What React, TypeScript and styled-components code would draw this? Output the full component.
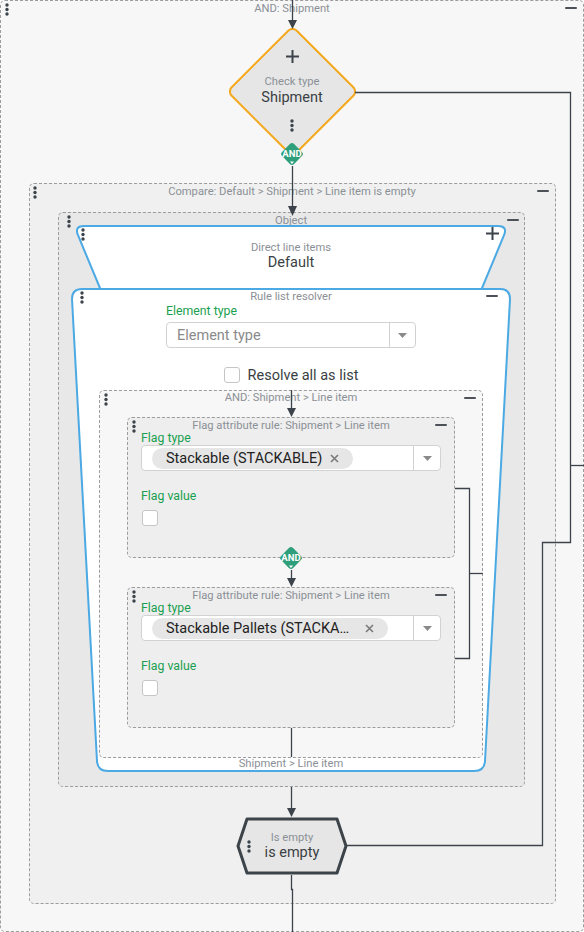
import React from 'react';
import styled, { createGlobalStyle } from 'styled-components';

const GlobalStyle = createGlobalStyle`
  html, body { margin: 0; padding: 0; background: #ffffff; }
  body { font-family: Roboto, "Noto Sans", "Liberation Sans", sans-serif; }
  * { box-sizing: border-box; }
`;

const C = {
  line: '#3c434a',
  title: '#8b9096',
  text: '#3a3f44',
  green: '#1a9f50',
  blue: '#4ba9e4',
  orange: '#f5a81c',
  badge: '#2f9e7a',
  dash: '#9c9c9c',
};

const Canvas = styled.div`
  position: relative;
  width: 584px;
  height: 932px;
  overflow: hidden;
`;

const Group = styled.div<{ $bg: string; $w: number; $h?: number; $mt?: number; $mr?: number; $pb?: number }>`
  position: relative;
  flex-shrink: 0;
  width: ${p => p.$w}px;
  ${p => (p.$h ? `height: ${p.$h}px;` : '')}
  margin-top: ${p => p.$mt ?? 0}px;
  margin-right: ${p => p.$mr ?? 0}px;
  padding-bottom: ${p => p.$pb ?? 0}px;
  border: 1px dashed ${C.dash};
  border-radius: 5px;
  background: ${p => p.$bg};
  display: flex;
  flex-direction: column;
  align-items: center;
`;

const HeaderRow = styled.div<{ $pt?: number }>`
  align-self: stretch;
  flex-shrink: 0;
  height: ${p => 14 + (p.$pt ?? 0)}px;
  padding-top: ${p => p.$pt ?? 0}px;
  display: grid;
  grid-template-columns: 40px 1fr 40px;
  align-items: start;
`;

const HeaderLeft = styled.div<{ $ml: number; $mt: number }>`
  justify-self: start;
  padding-left: ${p => p.$ml}px;
  padding-top: ${p => p.$mt}px;
`;

const HeaderTitle = styled.div<{ $shift: number }>`
  text-align: center;
  font-size: 11.2px;
  line-height: 14px;
  padding-top: ${p => p.$shift}px;
  color: ${C.title};
  white-space: nowrap;
`;

const HeaderRight = styled.div<{ $mr: number }>`
  justify-self: end;
  margin-right: ${p => p.$mr}px;
  height: 14px;
  display: flex;
  align-items: center;
`;

const MinusBar = styled.span`
  display: block;
  width: 12px;
  height: 2px;
  border-radius: 1px;
  background: #4b5157;
`;

const DotsSvg = styled.svg`
  display: block;
  fill: ${C.line};
`;

function Dots() {
  return (
    <DotsSvg width="4" height="13" viewBox="0 0 4 13">
      <circle cx="2" cy="2" r="1.7" />
      <circle cx="2" cy="6.5" r="1.7" />
      <circle cx="2" cy="11" r="1.7" />
    </DotsSvg>
  );
}

const PlusSvg = styled.svg`
  display: block;
  stroke: ${C.line};
  stroke-width: 2;
`;

function Plus() {
  return (
    <PlusSvg width="13" height="13" viewBox="0 0 13 13">
      <path d="M6.5 0 V13 M0 6.5 H13" />
    </PlusSvg>
  );
}

function GroupHeader(props: {
  title: string;
  dotsLeft?: number;
  dotsTop?: number;
  minusRight?: number;
  pt?: number;
  shift?: number;
}) {
  return (
    <HeaderRow $pt={props.pt}>
      <HeaderLeft $ml={props.dotsLeft ?? 4} $mt={props.dotsTop ?? 2}>
        <Dots />
      </HeaderLeft>
      <HeaderTitle $shift={props.shift ?? 1}>{props.title}</HeaderTitle>
      <HeaderRight $mr={props.minusRight ?? 6}>
        <MinusBar />
      </HeaderRight>
    </HeaderRow>
  );
}

/* ---------- stacked shape nodes ---------- */

const Stack = styled.div<{ $w: number; $h: number; $mt?: number; $z?: number }>`
  position: relative;
  z-index: ${p => p.$z ?? 'auto'};
  flex-shrink: 0;
  display: grid;
  width: ${p => p.$w}px;
  height: ${p => p.$h}px;
  margin-top: ${p => p.$mt ?? 0}px;
  & > * { grid-area: 1 / 1; }
`;

const ShapeSvg = styled.svg`
  display: block;
`;

const NodeColumn = styled.div<{ $pt?: number }>`
  display: flex;
  flex-direction: column;
  align-items: center;
  padding-top: ${p => p.$pt ?? 0}px;
  min-width: 0;
`;

const SmallGray = styled.div<{ $mt?: number; $lh?: number }>`
  font-size: 11.2px;
  line-height: ${p => p.$lh ?? 13}px;
  color: ${C.title};
  margin-top: ${p => p.$mt ?? 0}px;
  white-space: nowrap;
`;

const MainText = styled.div<{ $mt?: number; $lh?: number }>`
  font-size: 14.5px;
  line-height: ${p => p.$lh ?? 16}px;
  color: ${C.text};
  margin-top: ${p => p.$mt ?? 0}px;
  white-space: nowrap;
`;

const Spacer = styled.div<{ $h: number }>`
  height: ${p => p.$h}px;
  flex-shrink: 0;
`;

/* diamond */
function DiamondNode() {
  return (
    <Stack $w={127} $h={127} $mt={13}>
      <ShapeSvg width="127" height="127" viewBox="0 0 127 127">
        <rect x="17.5" y="17.5" width="92" height="92" rx="6" transform="rotate(45 63.5 63.5)"
          fill="#e6e6e6" stroke={C.orange} strokeWidth="2" />
      </ShapeSvg>
      <NodeColumn $pt={22}>
        <Plus />
        <SmallGray $mt={12}>Check type</SmallGray>
        <MainText $mt={2}>Shipment</MainText>
        <Spacer $h={13} />
        <Dots />
      </NodeColumn>
    </Stack>
  );
}

/* AND badge */
const BadgeText = styled.div`
  display: flex;
  align-items: center;
  justify-content: center;
  padding-bottom: 1px;
  font-size: 9.5px;
  font-weight: 700;
  color: #ffffff;
`;

function AndBadge(props: { mt: number }) {
  return (
    <Stack $w={24} $h={24} $mt={props.mt} $z={2}>
      <ShapeSvg width="24" height="24" viewBox="0 0 24 24">
        <rect x="3.5" y="3.5" width="17" height="17" rx="3" transform="rotate(45 12 12)" fill={C.badge} />
        <polygon points="10,19.5 14,19.5 12,22" fill="#ffffff" />
      </ShapeSvg>
      <BadgeText>AND</BadgeText>
    </Stack>
  );
}

/* direct line items trapezoid */
const DirectTopRow = styled.div`
  align-self: stretch;
  height: 14px;
  display: flex;
  justify-content: space-between;
  align-items: flex-start;
  padding: 0 9px 0 7px;
`;

const DotsBox = styled.div<{ $mt?: number }>`
  padding-top: ${p => p.$mt ?? 0}px;
`;

function DirectNode() {
  return (
    <Stack $w={434} $h={80} $mt={-2}>
      <ShapeSvg width="434" height="80" viewBox="0 0 434 80">
        <path d="M10 1 H424 Q433 1 430.5 9 L401 80 H33 L3.5 9 Q1 1 10 1 Z"
          fill="#ffffff" stroke={C.blue} strokeWidth="2" />
      </ShapeSvg>
      <NodeColumn $pt={2}>
        <DirectTopRow>
          <DotsBox $mt={1}><Dots /></DotsBox>
          <Plus />
        </DirectTopRow>
        <SmallGray>Direct line items</SmallGray>
        <MainText $mt={1}>Default</MainText>
      </NodeColumn>
    </Stack>
  );
}

/* form controls */
const FieldBlock = styled.div<{ $w: number }>`
  width: ${p => p.$w}px;
  display: flex;
  flex-direction: column;
  align-items: stretch;
`;

const FieldLabel = styled.div<{ $mt?: number }>`
  font-size: 12.3px;
  line-height: 14px;
  color: ${C.green};
  margin-top: ${p => p.$mt ?? 0}px;
  white-space: nowrap;
`;

const SelectBox = styled.div<{ $mt?: number }>`
  display: flex;
  height: 26px;
  margin-top: ${p => p.$mt ?? 0}px;
  background: #ffffff;
  border: 1px solid #d2d2d2;
  border-radius: 4px;
`;

const SelectValue = styled.div`
  flex: 1;
  min-width: 0;
  display: flex;
  align-items: center;
  padding-left: 10px;
`;

const Placeholder = styled.span`
  font-size: 14.5px;
  color: #8a8a8a;
  white-space: nowrap;
`;

const SelectCaret = styled.div<{ $w: number }>`
  width: ${p => p.$w}px;
  flex-shrink: 0;
  border-left: 1px solid #d2d2d2;
  display: flex;
  align-items: center;
  justify-content: center;
`;

function Caret() {
  return (
    <svg width="9" height="5" viewBox="0 0 9 5">
      <polygon points="0,0 9,0 4.5,5" fill="#8a8a8a" />
    </svg>
  );
}

const Chip = styled.span`
  display: inline-flex;
  align-items: center;
  height: 21px;
  padding: 0 14px;
  border-radius: 11px;
  background: #e6e6e6;
`;

const ChipText = styled.span<{ $w?: number }>`
  font-size: 14.5px;
  color: #222222;
  white-space: nowrap;
  margin-right: 8px;
  ${p => (p.$w ? `width: ${p.$w}px;` : '')}
`;

function XIcon() {
  return (
    <svg width="9" height="9" viewBox="0 0 9 9">
      <path d="M1 1 L8 8 M8 1 L1 8" stroke="#7a7a7a" strokeWidth="1.6" />
    </svg>
  );
}

const CheckBox = styled.span<{ $mt?: number; $ml?: number }>`
  display: block;
  flex-shrink: 0;
  width: 16px;
  height: 16px;
  margin-top: ${p => p.$mt ?? 0}px;
  margin-left: ${p => p.$ml ?? 0}px;
  background: #ffffff;
  border: 1px solid #c5c5c5;
  border-radius: 3px;
`;

const CheckRow = styled.div<{ $mt?: number }>`
  display: flex;
  align-items: center;
  gap: 8px;
  height: 16px;
  margin-top: ${p => p.$mt ?? 0}px;
`;

const CheckLabel = styled.span`
  font-size: 14.5px;
  line-height: 16px;
  padding-top: 1px;
  color: ${C.text};
  white-space: nowrap;
`;

/* flag rule */
const FlagBody = styled.div`
  align-self: stretch;
  padding: 0 13px;
  display: flex;
  flex-direction: column;
  align-items: stretch;
`;

function FlagRule(props: { chip: string; chipW?: number; mt: number }) {
  return (
    <Group $w={328} $bg="#eeeeee" $mt={props.mt} $pb={31}>
      <GroupHeader title="Flag attribute rule: Shipment > Line item" minusRight={7} />
      <FlagBody>
        <FieldLabel $mt={-1}>Flag type</FieldLabel>
        <SelectBox $mt={0}>
          <SelectValue>
            <Chip>
              <ChipText $w={props.chipW}>{props.chip}</ChipText>
              <XIcon />
            </Chip>
          </SelectValue>
          <SelectCaret $w={27}><Caret /></SelectCaret>
        </SelectBox>
        <FieldLabel $mt={18}>Flag value</FieldLabel>
        <CheckBox $mt={7} $ml={1} />
      </FlagBody>
    </Group>
  );
}

/* resolver */
const BottomLabel = styled.div`
  font-size: 11.2px;
  line-height: 12px;
  color: ${C.title};
  white-space: nowrap;
`;

function ResolverNode() {
  return (
    <Stack $w={440} $h={484} $mt={-17} $z={1}>
      <ShapeSvg width="440" height="484" viewBox="0 0 440 484">
        <path d="M11 1 H429 Q439 1 439 11 L414 473 Q413.5 483 403 483 H37 Q26.5 483 26 473 L1 11 Q1 1 11 1 Z"
          fill="#ffffff" stroke={C.blue} strokeWidth="2" />
      </ShapeSvg>
      <NodeColumn>
        <GroupHeader title="Rule list resolver" pt={1} dotsLeft={9} dotsTop={1.5} minusRight={13} />
        <FieldBlock $w={250}>
          <FieldLabel $mt={1}>Element type</FieldLabel>
          <SelectBox $mt={4}>
            <SelectValue><Placeholder>Element type</Placeholder></SelectValue>
            <SelectCaret $w={26}><Caret /></SelectCaret>
          </SelectBox>
        </FieldBlock>
        <CheckRow $mt={19}>
          <CheckBox />
          <CheckLabel>Resolve all as list</CheckLabel>
        </CheckRow>
        <Group $w={384} $bg="#f7f7f7" $mt={7} $pb={29}>
          <GroupHeader title="AND: Shipment > Line item" shift={0} />
          <FlagRule mt={12} chip="Stackable (STACKABLE)" />
          <AndBadge mt={-12} />
          <FlagRule mt={17} chip="Stackable Pallets (STACKA…" chipW={191} />
        </Group>
        <BottomLabel>Shipment &gt; Line item</BottomLabel>
      </NodeColumn>
    </Stack>
  );
}

/* hexagon */
const HexContent = styled.div`
  display: grid;
  grid-template-columns: 1fr auto 1fr;
  align-items: center;
`;

const HexDots = styled.div`
  justify-self: start;
  margin-left: 11px;
`;

const HexText = styled.div`
  display: flex;
  flex-direction: column;
  align-items: center;
`;

function HexNode() {
  return (
    <Stack $w={112} $h={58} $mt={30}>
      <ShapeSvg width="112" height="58" viewBox="0 0 112 58">
        <polygon points="2,29 11,2 101,2 110,29 101,56 11,56"
          fill="#e6e6e6" stroke="#3d4449" strokeWidth="3" strokeLinejoin="round" />
      </ShapeSvg>
      <HexContent>
        <HexDots><Dots /></HexDots>
        <HexText>
          <SmallGray $lh={13}>Is empty</SmallGray>
          <MainText $lh={17}>is empty</MainText>
        </HexText>
        <span />
      </HexContent>
    </Stack>
  );
}

/* connectors overlay */
const Overlay = styled.svg`
  position: absolute;
  left: 0;
  top: 0;
  z-index: 10;
  pointer-events: none;
`;

function arrow(x: number, base: number, tip: number) {
  return `${x - 4.5},${base} ${x + 4.5},${base} ${x},${tip}`;
}

function Connectors() {
  return (
    <Overlay width="584" height="932" viewBox="0 0 584 932">
      <g stroke={C.line} strokeWidth="1.3" fill="none">
        <path d="M292.5 0 V21" />
        <path d="M292.5 166 V207" />
        <path d="M355 92.5 H570.5 V542.5 H542.5 V845.5 H347" />
        <path d="M570.5 465.5 H584" />
        <path d="M291.5 390 V409" />
        <path d="M291.5 570 V579" />
        <path d="M291.5 728 V757" />
        <path d="M455 488.5 H469.5 V658.5 H455" />
        <path d="M469.5 573.5 H483" />
        <path d="M291.5 787 V809" />
        <path d="M291.5 875 V889.5 H292.5 V932" />
      </g>
      <g fill={C.line}>
        <polygon points={arrow(292.5, 20, 29)} />
        <polygon points={arrow(292.5, 206, 216)} />
        <polygon points={arrow(291.5, 408, 417)} />
        <polygon points={arrow(291.5, 578, 587)} />
        <polygon points={arrow(291.5, 808, 817)} />
      </g>
    </Overlay>
  );
}

export default function App() {
  return (
    <>
      <GlobalStyle />
      <Canvas>
        <Group $w={584} $h={932} $bg="#f7f7f7">
          <GroupHeader title="AND: Shipment" />
          <DiamondNode />
          <AndBadge mt={-13} />
          <Group $w={527} $bg="#f0f0f0" $mt={17} $pb={28}>
            <GroupHeader title="Compare: Default > Shipment > Line item is empty" dotsLeft={3} />
            <Group $w={467} $bg="#e8e8e8" $mt={14} $mr={2} $pb={14}>
              <GroupHeader title="Object" dotsLeft={8} minusRight={5} />
              <DirectNode />
              <ResolverNode />
            </Group>
            <HexNode />
          </Group>
        </Group>
        <Connectors />
      </Canvas>
    </>
  );
}
